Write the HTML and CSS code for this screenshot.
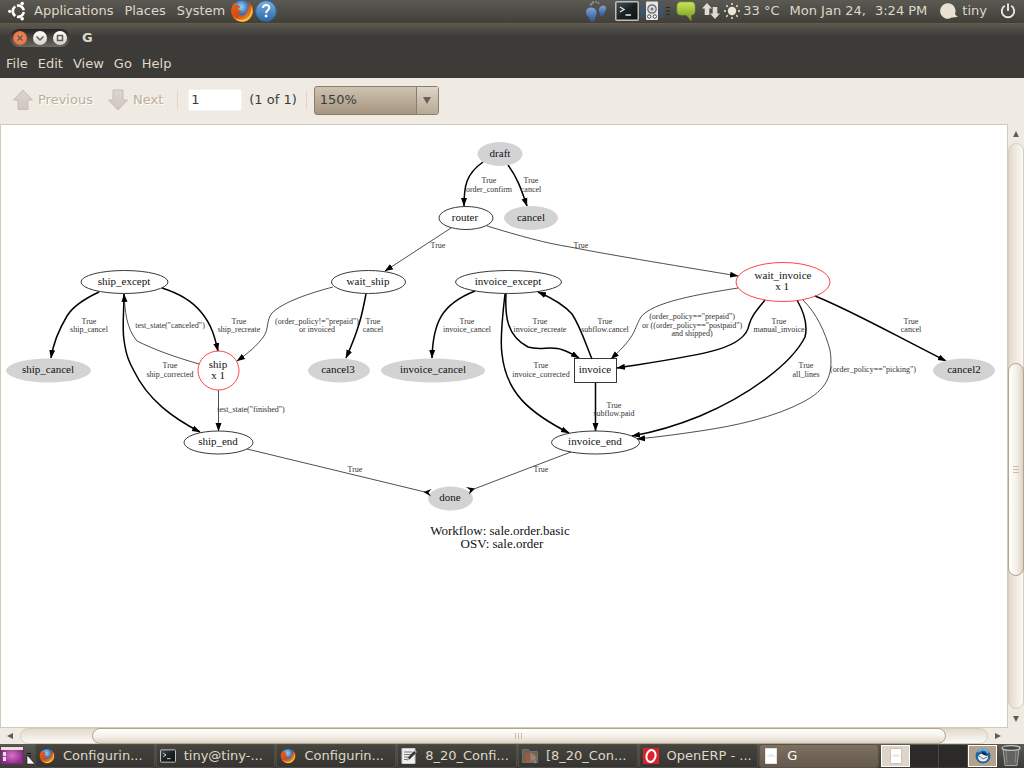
FILE: index.html
```html
<!DOCTYPE html>
<html lang="en">
<head>
<meta charset="utf-8">
<title>G</title>
<link rel="stylesheet" href="styles.css">
</head>
<body>
<svg class="defs" width="0" height="0" aria-hidden="true">
  <defs>
    <radialGradient id="ffGlobe" cx=".45" cy=".3" r=".7"><stop offset="0" stop-color="#9fd4f5"/><stop offset=".5" stop-color="#2f74c0"/><stop offset="1" stop-color="#0d2464"/></radialGradient>
    <linearGradient id="ffFox" x1="0" y1="0" x2="1" y2="1"><stop offset="0" stop-color="#e8661b"/><stop offset=".5" stop-color="#d9480f"/><stop offset="1" stop-color="#f9b530"/></linearGradient>
    <linearGradient id="chat" x1="0" y1="0" x2="0" y2="1"><stop offset="0" stop-color="#cbe55c"/><stop offset="1" stop-color="#6f9a1c"/></linearGradient>
    <linearGradient id="help" x1="0" y1="0" x2="0" y2="1"><stop offset="0" stop-color="#7fb0dc"/><stop offset="1" stop-color="#2a66a8"/></linearGradient>
    <linearGradient id="foot" x1="0" y1="0" x2="0" y2="1"><stop offset="0" stop-color="#7ba4d8"/><stop offset="1" stop-color="#2c5590"/></linearGradient>
    <linearGradient id="nav" x1="0" y1="0" x2="0" y2="1"><stop offset="0" stop-color="#ddd5cd"/><stop offset="1" stop-color="#cfc6bf"/></linearGradient>
    <linearGradient id="term" x1="0" y1="0" x2="1" y2="1"><stop offset="0" stop-color="#4a545a"/><stop offset=".5" stop-color="#1b2226"/><stop offset="1" stop-color="#0c1012"/></linearGradient>
    <radialGradient id="desk"><stop offset="0" stop-color="#d873cb"/><stop offset="1" stop-color="#8d2c8a"/></radialGradient>
    <symbol id="firefox" viewBox="0 0 24 24">
      <circle cx="12" cy="12" r="10.5" fill="url(#ffGlobe)"/>
      <path d="M5 3.500C2 6 .8 9.500 1.200 13 2 19 7 23 12.500 22.800 19 22.500 23.500 17 23 11 22.700 7 20.500 4 18 2.500c1 2 1.300 4 1.200 5.800-.6-1.600-1.500-2.500-2.200-3 1.500 4 .7 8.500-2.500 10.400-3 1.600-6 .3-7.500-2 2 .7 4-.2 5-1.700-1.700 0-2.700-1-4-1.300-.4-1.200.8-1.700 2.800-2.600C10 7 8.600 6.700 7 6.300 5.700 5.800 5.200 4.800 5 3.500z" fill="url(#ffFox)"/>
      <path d="M21 6c1 5 .2 10.500-4.500 13.500C12 22 6 21 3 17c2.500 5 8 6.400 12 5.300C20.500 20.800 24.500 13.500 21 6z" fill="#fbc63e"/>
    </symbol>
    <symbol id="terminal" viewBox="0 0 24 20">
      <rect x=".75" y=".75" width="22.500" height="18.500" rx="1" fill="url(#term)" stroke="#bdbdbb" stroke-width="1.500"/>
      <path d="M5 6l4 2.500L5 11M10.500 14H16" fill="none" stroke="#e8e8e8" stroke-width="1.300"/>
    </symbol>
    <marker id="arrow" markerUnits="userSpaceOnUse" markerWidth="9" markerHeight="7" refX="8" refY="3.500" orient="auto"><path d="M0 .5l8.500 3L0 6.500z"/></marker>
  </defs>
</svg>

<div class="desktop">
  <header class="panel">
    <nav class="panel-menus" aria-label="Desktop">
      <button class="panel-button">
        <svg class="logo" viewBox="0 0 20 20"><g fill="none" stroke="#fff" stroke-width="2.600"><path d="M7.300 5.500A5.700 5.700 0 0 0 7.300 15"/><path d="M9 4.700A5.700 5.700 0 0 1 15.800 9.300"/><path d="M9 15.700A5.700 5.700 0 0 0 15.800 11"/></g><g fill="#fff"><circle cx="1.700" cy="10.300" r="1.600"/><circle cx="14.200" cy="2.600" r="1.800"/><circle cx="14.200" cy="17.800" r="1.800"/></g></svg>
        Applications</button>
      <button class="panel-button">Places</button>
      <button class="panel-button">System</button>
    </nav>
    <div class="launchers">
      <button class="icon-button" aria-label="Firefox"><svg width="24" height="24"><use href="#firefox"/></svg></button>
      <button class="icon-button" aria-label="Help"><svg width="22" height="22" viewBox="0 0 22 22"><circle cx="11" cy="11" r="10.300" fill="url(#help)" stroke="#2d6cab"/><path d="M8 8c.2-4 6.500-3.800 6.300-.2-.1 2.600-3.200 2.400-3.200 5.200" fill="none" stroke="#fff" stroke-width="2"/><circle cx="11.100" cy="16" r="1.400" fill="#fff"/></svg></button>
    </div>
    <div class="tray">
      <svg width="22" height="23" viewBox="0 0 22 23"><g fill="url(#foot)"><path d="M1 12C1 8 5 6.500 8.500 8c4 1.800 3.500 6 1.800 9 0 3-1 5-3 5s-3-2-3-4C2.500 16.500 1 14.500 1 12z"/><path d="M14 9c1-3 4-4.500 6-3 1.700 1.500 1.200 4.500-.5 6.500 0 2.500-1.700 4.500-3.500 4-1.300-.5-1.300-2-1-3.500-1-1-1.500-2.500-1-4z"/></g><g fill="#8e9193"><circle cx="6" cy="4.500" r="1.200"/><circle cx="8" cy="2.500" r="1.200"/><circle cx="11" cy="2" r="1"/><circle cx="13.500" cy="3" r="1"/></g></svg>
      <svg class="tray-term" width="24" height="20"><use href="#terminal"/></svg>
      <svg width="22" height="20" viewBox="0 0 22 20"><g fill="none" stroke="#315b91" stroke-width="1.300"><path d="M4 4Q0 9 4 15M18 4q4 5 0 11M2 2Q-2 9 2 17M20 2q4 7 0 15"/></g><rect x="5" y=".5" width="12" height="18.500" rx="1" fill="#e7e7e5"/><circle cx="11" cy="8" r="4.200" fill="#ddd" stroke="#666" stroke-width="1.200"/><circle cx="11" cy="8" r="1.500" fill="#777"/><circle cx="8.200" cy="15.500" r="1.700" fill="#fff" stroke="#444"/><circle cx="13.800" cy="15.500" r="1.700" fill="#fff" stroke="#444"/></svg>
      <svg class="grip" width="4" height="10" viewBox="0 0 4 10"><path d="M0 1.500h4M0 5h4M0 8.500h4" stroke="#2a2926"/></svg>
      <svg class="tray-chat" width="20" height="20" viewBox="0 0 20 20"><path d="M5 1h10c3 0 4 2 4 4.500v4c0 3-1.500 4.500-4 4.500v5.500L10.500 14H5c-3 0-4-2-4-4.500v-4C1 2.500 2.500 1 5 1z" fill="url(#chat)" stroke="#86a82c" stroke-width=".7"/></svg>
      <svg class="tray-net" width="18" height="18" viewBox="0 0 18 18" fill="#dfdbd2"><path d="M5 1l5 5.500H7.300V13H2.700V6.500H0zM13 17l-5-5.500h2.700V5h4.600v6.500H18z"/></svg>
      <button class="panel-button weather"><svg width="16" height="16" viewBox="0 0 16 16"><circle cx="8" cy="8" r="4.200" fill="#eee6d4"/><g stroke="#eee6d4" stroke-width="1.500"><path d="M8 0v2M8 14v2M0 8h2M14 8h2M2.300 2.300l1.400 1.400M12.300 12.300l1.400 1.400M13.700 2.300l-1.400 1.400M3.700 12.300l-1.400 1.400"/></g></svg>33 °C</button>
      <button class="panel-button clock"><span>Mon Jan 24,</span><span>3:24 PM</span></button>
      <button class="panel-button user"><svg width="18" height="16" viewBox="0 0 18 16"><path d="M8 .3a7.700 7.700 0 1 0 3.800 14.300c2 0 4-.2 6.200-1-1.800-.8-2.600-1.800-3-2.800A7.700 7.700 0 0 0 8 .3z" fill="#e9e1d2"/></svg>tiny</button>
      <button class="icon-button" aria-label="Shut down"><svg width="16" height="16" viewBox="0 0 16 16"><path d="M4.800 2.800a6.200 6.200 0 1 0 6.400 0M8 .5V8" fill="none" stroke="#eee6d8" stroke-width="1.900"/></svg></button>
    </div>
  </header>

  <main class="window">
    <div class="titlebar">
      <div class="window-buttons">
        <button class="round close" aria-label="Close"><svg viewBox="0 0 14 14"><path d="M4.500 4.500l5 5M9.500 4.500l-5 5"/></svg></button>
        <button class="round" aria-label="Minimize"><svg viewBox="0 0 14 14"><path d="M3.500 5.500L7 9l3.500-3.500"/></svg></button>
        <button class="round" aria-label="Maximize"><svg viewBox="0 0 14 14"><path d="M4.500 4.500h5v5h-5z"/></svg></button>
      </div>
      <h1 class="window-title">G</h1>
    </div>
    <nav class="menubar" aria-label="Application">
      <button>File</button><button>Edit</button><button>View</button><button>Go</button><button>Help</button>
    </nav>
    <div class="toolbar">
      <button class="tool" disabled><svg width="22" height="22" viewBox="0 0 22 22"><path d="M11 1l9.500 10H16v9.500H6V11H1.500z" fill="url(#nav)" stroke="#c6bdb5"/></svg>Previous</button>
      <button class="tool" disabled><svg width="22" height="22" viewBox="0 0 22 22"><path d="M11 21l9.500-10H16V1H6v10H1.500z" fill="url(#nav)" stroke="#c6bdb5"/></svg>Next</button>
      <span class="separator"></span>
      <label class="page-field"><input type="text" value="1" aria-label="Page"><span>(1 of 1)</span></label>
      <span class="separator"></span>
      <div class="zoom">
        <select aria-label="Zoom"><option>150%</option></select>
        <span class="zoom-arrow"></span>
      </div>
    </div>

    <div class="viewer">
      <div class="page">
        <svg class="graph" viewBox="1 125 1006 602" preserveAspectRatio="xMidYMin meet" role="img" aria-label="Workflow: sale.order.basic">
          <g class="edges bold">
            <path d="M483 162C466 174 464 186 464 206"/>
            <path d="M508 165C518 179 521 189 527 206"/>
            <path d="M99 292C84 299 73 306 67 316C58 331 53 345 51 358"/>
            <path d="M162 288C178 293 192 301 201 312C212 325 215 338 218 351"/>
            <path d="M124 294C124 312 122 328 124 340C126 355 129 362 134 371C148 400 173 418 200 432"/>
            <path d="M366 294C362 315 359 329 346 358"/>
            <path d="M475 291C442 304 433 322 432 358"/>
            <path d="M506 294C505 315 506 335 528 347C541 351 551 345 563 350C569 352 574 355 579 358"/>
            <path d="M505 294C502 320 500 342 502 354C506 392 528 412 569 433"/>
            <path d="M592 359C585 342 580 326 572 314C564 305 552 298 538 292"/>
            <path d="M765 300C757 310 752 315 749 325C745 350 700 355 617 368"/>
            <path d="M797 300C805 314 808 325 805 337C792 363 750 395 700 416C678 425 655 432 632 436"/>
            <path d="M815 296C850 310 885 330 946 361"/>
            <path d="M595.500 383V431"/>
          </g>
          <g class="edges">
            <path d="M451 228L385 271"/>
            <path d="M487 226C520 236 545 243 570 247C610 255 690 268 738 276"/>
            <path d="M199 364C175 357 155 350 137 341C126 328 125 310 124 294"/>
            <path d="M218.500 390V431"/>
            <path d="M333 287C310 293 283 302 272 313C266 321 269 328 264 336C258 345 247 354 237 361"/>
            <path d="M738 288C700 294 652 302 641 317C633 330 638 334 611 359"/>
            <path d="M803 300C817 314 825 332 830 350C834 376 826 390 803 402C775 417 735 426 700 431C680 434 658 437 637 439"/>
          </g>
          <g class="edges plain">
            <path d="M247 449L425 492"/><path d="M571 452L474 489"/>
          </g>
          <g class="nodes filled">
            <ellipse cx="500" cy="154" rx="22.500" ry="12"/>
            <ellipse cx="531" cy="218" rx="27" ry="12"/>
            <ellipse cx="48.500" cy="370.500" rx="42.500" ry="12"/>
            <ellipse cx="339" cy="370.500" rx="31" ry="12"/>
            <ellipse cx="433" cy="370.500" rx="52" ry="12"/>
            <ellipse cx="964" cy="370.500" rx="31" ry="12"/>
            <ellipse cx="450.500" cy="498.500" rx="22.500" ry="12"/>
          </g>
          <path d="M423.500 492l8-3-3 3.500 2.500 4zM475 488.500l-9-1.500 4 3-1 4.500z"/>
          <g class="nodes">
            <ellipse cx="466" cy="218" rx="27" ry="11.500"/>
            <ellipse cx="124.500" cy="282" rx="43.500" ry="11.500"/>
            <ellipse cx="368.500" cy="282" rx="37" ry="11.500"/>
            <ellipse cx="508.500" cy="282" rx="53" ry="11.500"/>
            <rect x="574.500" y="358.500" width="42" height="24"/>
            <ellipse cx="218.500" cy="442.500" rx="34.500" ry="11.500"/>
            <ellipse cx="595.500" cy="442.500" rx="44" ry="11.500"/>
          </g>
          <g class="nodes active">
            <ellipse cx="783" cy="282" rx="47" ry="19.500"/>
            <ellipse cx="218.500" cy="370.500" rx="20.500" ry="19.500"/>
          </g>
          <g class="node-text">
            <text x="500" y="157">draft</text><text x="465" y="221">router</text><text x="531" y="221">cancel</text>
            <text x="124" y="285">ship_except</text><text x="368" y="285">wait_ship</text><text x="508" y="285">invoice_except</text>
            <text x="783" y="279">wait_invoice</text><text x="782" y="290">x 1</text>
            <text x="48" y="373">ship_cancel</text><text x="218" y="368">ship</text><text x="218" y="379">x 1</text>
            <text x="338" y="373">cancel3</text><text x="433" y="373">invoice_cancel</text><text x="595" y="373">invoice</text><text x="964" y="373">cancel2</text>
            <text x="218" y="445">ship_end</text><text x="595" y="445">invoice_end</text><text x="450" y="501">done</text>
          </g>
          <g class="title-text">
            <text x="500" y="535">Workflow: sale.order.basic</text><text x="502" y="548">OSV: sale.order</text>
          </g>
          <g class="edge-text">
            <text x="489" y="183">True</text><text x="489" y="192">order_confirm</text>
            <text x="531" y="183">True</text><text x="531" y="192">cancel</text>
            <text x="438" y="248">True</text><text x="581" y="248">True</text>
            <text x="89" y="324">True</text><text x="89" y="332">ship_cancel</text>
            <text x="170" y="328">test_state("canceled")</text>
            <text x="239" y="324">True</text><text x="239" y="332">ship_recreate</text>
            <text x="170" y="368">True</text><text x="170" y="377">ship_corrected</text>
            <text x="251" y="412">test_state("finished")</text>
            <text x="317" y="324">(order_policy!="prepaid")</text><text x="317" y="332">or invoiced</text>
            <text x="373" y="324">True</text><text x="373" y="332">cancel</text>
            <text x="467" y="324">True</text><text x="467" y="332">invoice_cancel</text>
            <text x="540" y="324">True</text><text x="540" y="332">invoice_recreate</text>
            <text x="605" y="324">True</text><text x="605" y="332">subflow.cancel</text>
            <text x="541" y="368">True</text><text x="541" y="377">invoice_corrected</text>
            <text x="692" y="319">(order_policy=="prepaid")</text><text x="692" y="328">or ((order_policy=="postpaid")</text><text x="692" y="336">and shipped)</text>
            <text x="779" y="324">True</text><text x="779" y="332">manual_invoice</text>
            <text x="911" y="324">True</text><text x="911" y="332">cancel</text>
            <text x="806" y="368">True</text><text x="806" y="377">all_lines</text>
            <text x="873" y="372">(order_policy=="picking")</text>
            <text x="614" y="408">True</text><text x="614" y="416">subflow.paid</text>
            <text x="355" y="472">True</text><text x="541" y="472">True</text>
          </g>
        </svg>
      </div>
      <div class="scroll vertical">
        <button class="step" aria-label="Scroll up"><svg width="8" height="8" viewBox="0 0 8 8"><path d="M4 1l3 6H1z"/></svg></button>
        <div class="track"><span class="before"></span><span class="thumb"><i></i><i></i><i></i></span><span class="after"></span></div>
        <button class="step" aria-label="Scroll down"><svg width="8" height="8" viewBox="0 0 8 8"><path d="M4 7L1 1h6z"/></svg></button>
      </div>
      <div class="scroll horizontal">
        <button class="step" aria-label="Scroll left"><svg width="8" height="8" viewBox="0 0 8 8"><path d="M1 4l6-3v6z"/></svg></button>
        <div class="track"><span class="before"></span><span class="thumb"><i></i><i></i><i></i></span><span class="after"></span></div>
        <button class="step" aria-label="Scroll right"><svg width="8" height="8" viewBox="0 0 8 8"><path d="M7 4L1 1v6z"/></svg></button>
      </div>
    </div>
  </main>

  <footer class="taskbar">
    <button class="show-desktop" aria-label="Show desktop"><svg width="35" height="23" viewBox="0 0 35 23"><rect x="1" y="3" width="22" height="17" fill="url(#desk)" stroke="#65305f"/><path d="M1 3h22v3H1z" fill="#e8e3d3"/><path d="M3 8h3v4H3zM3 13h3v4H3z" fill="#e9dcea"/><path d="M27 9.500h4M27 12h4" stroke="#171715"/><path d="M27 11v9h8z" fill="#fff" stroke="#111" stroke-width=".6"/></svg></button>
    <div class="tasks">
      <button class="task"><svg width="16" height="16"><use href="#firefox"/></svg><span>Configurin...</span></button>
      <button class="task"><svg width="16" height="14"><use href="#terminal"/></svg><span>tiny@tiny-...</span></button>
      <button class="task"><svg width="16" height="16"><use href="#firefox"/></svg><span>Configurin...</span></button>
      <button class="task"><svg width="16" height="16" viewBox="0 0 16 16"><path d="M1 .5h13v15H1z" fill="#eee" stroke="#ccc"/><path d="M3 4h8M3 6.500h7M3 9h5M3 11.500h4" stroke="#777"/><path d="M6 12.500l1-3L13 3l2 2-6.500 6.500z" fill="#333"/><path d="M6 12.500l1-3 1.500 2z" fill="#e8d46a"/><path d="M13 3l1-1 2 2-1 1z" fill="#d38dbc"/></svg><span>8_20_Confi...</span></button>
      <button class="task"><svg width="16" height="16" viewBox="0 0 16 16"><path d="M.5 1.500h6l1.500 2h7.500v11H.5z" fill="#67615b" stroke="#77716b"/><path d="M3 5h11v9H3z" fill="#9b5c3c"/><path d="M8.500 4v10l2.300-2.500 2 4 1.700-1-2-3.500h3z" fill="#8b8984"/></svg><span>[8_20_Con...</span></button>
      <button class="task"><svg width="16" height="16" viewBox="0 0 16 16"><path d="M0 0h16v16H0z" fill="#d9222a"/><ellipse cx="8" cy="8" rx="4.500" ry="6" transform="rotate(14 8 8)" fill="none" stroke="#fff" stroke-width="2"/></svg><span>OpenERP - ...</span></button>
      <button class="task current"><svg width="16" height="16" viewBox="0 0 16 16"><path d="M2.500.5h11v15h-11z" fill="#fff" stroke="#e4e4e4"/><path d="M4 8h8M6 7h4" stroke="#ddd"/></svg><span>G</span></button>
    </div>
    <div class="pager">
      <button class="space shown" aria-label="Workspace 1"><svg width="12" height="16" viewBox="0 0 12 16"><path d="M.5.5h11v15H.5z" fill="#fff" stroke="#c7c2bb"/><path d="M2 8h8M4 7h4" stroke="#ddd"/></svg></button>
      <button class="space" aria-label="Workspace 2"></button>
      <button class="space" aria-label="Workspace 3"></button>
      <button class="space busy" aria-label="Workspace 4"><svg width="16" height="16" viewBox="0 0 16 16"><circle cx="8" cy="8" r="7.500" fill="#1d64a5"/><path d="M3 4c3-4 9-3 10 1" fill="none" stroke="#6bb4e8" stroke-width="2"/><ellipse cx="8" cy="9.500" rx="5" ry="4" fill="#e9eef2"/><path d="M6 5c3-2 6 0 6 3-2-1-4-1-6-3z" fill="#12233a"/><path d="M4 8l4 3 4-2" fill="none" stroke="#66717a"/></svg></button>
    </div>
    <button class="icon-button trash" aria-label="Trash"><svg width="20" height="22" viewBox="0 0 20 22"><path d="M2 3h16l-2 17.500H4z" fill="#62625f" stroke="#a6a6a3"/><path d="M5 5l1 13M15 5l-1 13" stroke="#8a8a87"/><ellipse cx="10" cy="3" rx="9" ry="2.300" fill="#444" stroke="#c4c4c1" stroke-width="1.300"/></svg></button>
  </footer>
</div>
</body>
</html>
```
FILE: styles.css
```css
* { box-sizing: border-box; }
html, body { height: 100%; }
body {
  margin: 0;
  font: 13px/16px "DejaVu Sans", sans-serif;
  color: #3c3b37;
  background: #efebe3;
}
button, input, select { font: inherit; color: inherit; }
button { margin: 0; padding: 0; border: 0; background: none; }
svg { flex: none; }
.defs { position: absolute; }
.desktop { height: 100vh; display: flex; flex-direction: column; overflow: hidden; }

.panel {
  display: flex;
  align-items: center;
  height: 24px;
  padding: 0 8px 1px;
  color: #dfd8c8;
  background: linear-gradient(#5b5953, #413f3a);
  border-bottom: 1px solid #6d5a40;
}
.panel-menus { display: flex; gap: 11px; }
.panel-button { display: flex; align-items: center; gap: 6px; white-space: nowrap; }
.logo { width: 20px; height: 20px; }
.icon-button { display: flex; align-items: center; }
.launchers { display: flex; align-items: center; gap: 1px; margin-left: 5px; }
.tray { display: flex; align-items: center; margin-left: auto; }
.tray-term { margin: 0 2px 0 8px; }
.grip { margin: 0 6px 0 3px; }
.tray-net { margin: 0 4px 0 6px; }
.weather { gap: 3px; }
.clock { gap: 9px; margin-left: 10px; }
.user { gap: 4px; margin: 0 13px; }

.window { flex: 1; min-height: 0; display: flex; flex-direction: column; }
.titlebar {
  display: flex;
  align-items: center;
  gap: 12px;
  height: 28px;
  padding: 0 10px;
  color: #dfd8c8;
  background: linear-gradient(#5a5852, #3c3b37 13px);
}
.window-buttons {
  display: flex;
  align-items: center;
  gap: 6px;
  height: 18px;
  padding: 0 3px;
  border-radius: 9px;
  background: linear-gradient(#24231f, #6b6963);
}
.round {
  width: 14px;
  height: 14px;
  border-radius: 50%;
  background: linear-gradient(#fff, #d5d0c6);
}
.round.close { background: radial-gradient(#f8976c, #e65c2d); }
.round svg { display: block; fill: none; stroke: #5e5a54; stroke-width: 1.5; }
.window-title { margin: 0; font-size: 13px; line-height: 16px; }
.menubar {
  display: flex;
  gap: 10px;
  height: 26px;
  padding: 0 6px 2px;
  color: #dfd8c8;
  background: #3c3b37;
}

.toolbar {
  display: flex;
  align-items: center;
  height: 46px;
  padding: 0 12px 2px;
  background: #efebe3;
}
.tool { display: flex; align-items: center; gap: 4px; margin-right: 14px; }
.tool:disabled { color: #bcae9b; text-shadow: 1px 1px #fff; }
.separator { width: 1px; height: 18px; background: #ddd5c7; }
.page-field { display: flex; align-items: center; gap: 7px; margin: 0 9px 0 10px; }
.page-field input {
  width: 54px;
  height: 22px;
  padding: 0 2px 1px;
  border: 1px solid #f5f2ec;
  border-radius: 2px;
  background: #fff;
}
.zoom {
  display: flex;
  align-items: stretch;
  width: 125px;
  height: 29px;
  margin-left: 7px;
  border: 1px solid #8b7d6b;
  border-radius: 3px;
  background: linear-gradient(#cec2b1, #a59580);
}
.zoom select {
  flex: 1;
  padding: 0 5px;
  border: 0;
  appearance: none;
  background: none;
}
.zoom-arrow {
  display: flex;
  align-items: center;
  justify-content: center;
  width: 22px;
  border-left: 1px solid #8b7d6b;
  background: linear-gradient(#ded4c7, #b6a995);
}
.zoom-arrow::before {
  content: "";
  border: 4px solid transparent;
  border-top: 7px solid #686259;
  border-bottom: 0;
}

.viewer {
  flex: 1;
  min-height: 0;
  display: grid;
  grid-template: minmax(0, 1fr) 16px / minmax(0, 1fr) 16px;
}
.page { min-height: 0; border: 1px solid #d5cab8; background: #fff; }
.graph { display: block; width: 100%; height: 100%; font-family: "Liberation Serif", serif; text-anchor: middle; }
.edges { fill: none; stroke: #222; stroke-width: 0.8; }
.edges path { marker-end: url(#arrow); }
.edges.plain path { marker-end: none; }
.edges.bold { stroke: #000; stroke-width: 1.5; }
.nodes { fill: none; stroke: #222; stroke-width: 0.9; }
.nodes.filled { fill: #d3d3d3; stroke: none; }
.nodes.active { stroke: #ff3030; }
.node-text { font-size: 11px; fill: #111; }
.title-text { font-size: 13px; fill: #111; }
.edge-text { font-size: 8px; fill: #333; }

.scroll { display: flex; }
.vertical { flex-direction: column; }
.step { display: flex; align-items: center; justify-content: center; fill: #625d55; }
.vertical .step { height: 19px; }
.horizontal .step { width: 20px; }
.track { flex: 1; display: flex; border-radius: 8px; border: 1px solid #d8cdbc; }
.vertical .track { flex-direction: column; background: linear-gradient(90deg, #e3dacd, #fbf9f6); }
.horizontal .track { background: linear-gradient(#e3dacd, #fbf9f6); }
.thumb {
  display: flex;
  align-items: center;
  justify-content: center;
  gap: 2px;
  margin: -1px;
  border: 1px solid #b3a48d;
  border-radius: 8px;
}
.thumb i { background: #c9bda9; }
.vertical .thumb { flex: 211; flex-direction: column; background: linear-gradient(90deg, #fff, #f6f2ea 50%, #ddd3c5); }
.vertical .thumb i { width: 6px; height: 1px; }
.vertical .before { flex: 220; }
.vertical .after { flex: 133; }
.horizontal .thumb { flex: 854; background: linear-gradient(#fff, #f6f2ea 50%, #ddd3c5); }
.horizontal .thumb i { width: 1px; height: 6px; }
.horizontal .before { flex: 72; }
.horizontal .after { flex: 42; }

.taskbar {
  display: flex;
  align-items: stretch;
  height: 24px;
  color: #dfd8c8;
  background: linear-gradient(#5b5953, #3c3b37);
}
.show-desktop { display: flex; }
.tasks { flex: 1; min-width: 0; display: flex; gap: 1px; }
.task {
  flex: 1;
  min-width: 0;
  display: flex;
  align-items: center;
  gap: 8px;
  padding: 0 3px;
  border: 1px solid #4e4c47;
  border-radius: 3px;
  background: linear-gradient(#46443f, #353430);
  white-space: nowrap;
}
.task span { overflow: hidden; }
.task.current { color: #fff; border-color: #5a5045; background: linear-gradient(#7d7062, #65594c); }
.pager { display: flex; padding: 1px 0 1px 2px; }
.space { display: flex; align-items: center; justify-content: center; width: 29px; background: #2b2a28; border-right: 1px solid #4a4945; }
.space.shown { border: 1px solid #fff; background: #ded5c9; }
.space.busy { border: 1px solid #fff; background: #b4a38b; }
.trash { padding: 0 3px 0 4px; }
```
